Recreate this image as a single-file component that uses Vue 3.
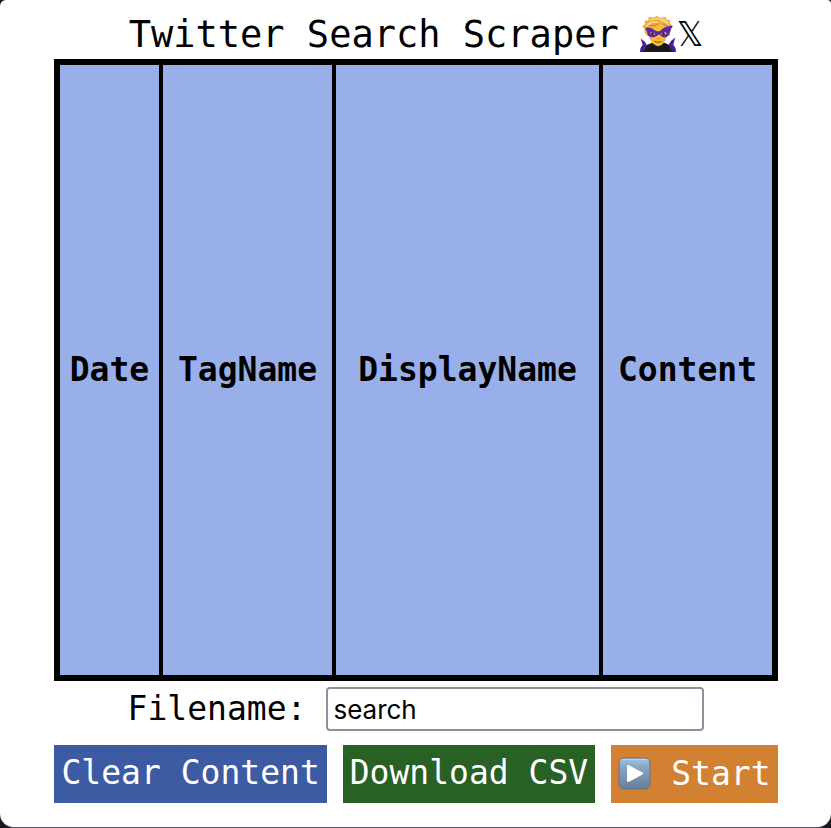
<script setup>
import { ref } from 'vue'

const columns = [
  { name: 'Date', key: 'date' },
  { name: 'TagName', key: 'tag' },
  { name: 'DisplayName', key: 'display' },
  { name: 'Content', key: 'content' }
]
const filename = ref('search')
</script>

<template>
  <main class="popup">
    <h1 class="title">
      <span>Twitter Search Scraper</span>
      <span class="marks">
        <svg class="villain" viewBox="0 0 42 42" aria-hidden="true">
          <path d="M1 41 Q1 36 4 33 L2 26 Q7 29 9 34 L7 41 Z M41 41 Q41 36 38 33 L40 25 Q35 28 32 34 L35 41 Z" fill="#4a1f92" />
          <path d="M4 41 Q7 38 9 33 L16 30 H27 L33 33 Q35 38 38 41 Z" fill="#1f1b24" />
          <path d="M17 27 H26 V32 Q21 37 17 32 Z" fill="#c98518" />
          <path d="M11 15 Q12 8 21 8 Q31 8 31 16 V22 Q30 29 26 32 Q21 36 16 32 Q11 28 11 22 Z" fill="#f8bc35" />
          <path d="M9 23 Q5 19 6 14 L3 13 L7 10 L6 6 L10 6 L11 2 L15 3 L20 1 L23 3 L29 2 L31 5 L35 6 L34 9 L38 13 L35 15 L34 23 L31 22 L31 15 Q26 13 24 10 Q21 14 15 14 Q11 15 11 22 Z" fill="#e8ad45" />
          <path d="M8 13 Q11 7 18 8 M12 6 Q20 2 25 6 Q31 7 33 13 M10 10 Q17 6 22 9 M25 4 Q30 4 32 8" fill="none" stroke="#ffd684" stroke-width="1.6" stroke-linecap="round" />
          <path d="M13 12 Q19 12 22 9 M27 10 Q30 12 32 12 M7 16 Q9 14 11 14" fill="none" stroke="#bd7b28" stroke-width="1" stroke-linecap="round" />
          <path d="M7 14 Q13 13 18 17 Q21 19 24 17 Q29 12 37 12 Q35 17 33 22 Q29 27 24 23 Q22 20 20 23 Q15 27 10 23 Q9 18 7 14 Z" fill="#6027a5" />
          <path d="M12 20 Q15 18 18 21 Q15 23 12 20 Z M24 21 Q27 18 31 20 Q28 23 24 21 Z" fill="#f8d284" />
          <circle cx="15" cy="20.5" r="1.5" fill="#351b22" />
          <circle cx="27" cy="20.5" r="1.5" fill="#351b22" />
          <path d="M20 26 Q21 27 23 26" fill="none" stroke="#cf861b" stroke-width="1" />
          <path d="M17 29 Q21 31 25 29" fill="none" stroke="#93501a" stroke-width="1.3" />
          <path d="M9 41 Q10 35 14 32 Q21 39 28 32 Q33 35 33 41 Z" fill="#19161e" />
        </svg><span class="x-mark">𝕏</span>
      </span>
    </h1>

    <table class="results">
      <colgroup>
        <col v-for="column in columns" :key="column.key" :class="`col-${column.key}`" />
      </colgroup>
      <thead>
        <tr>
          <th v-for="column in columns" :key="column.key" scope="col">{{ column.name }}</th>
        </tr>
      </thead>
    </table>

    <div class="file-row">
      <label for="filename">Filename:</label>
      <input id="filename" v-model="filename" type="text" />
    </div>

    <div class="actions">
      <button class="clear" type="button">Clear Content</button>
      <button class="download" type="button">Download CSV</button>
      <button class="start" type="button">
        <svg class="play" viewBox="0 0 33 33" aria-hidden="true">
          <defs>
            <linearGradient id="playFill" x1="0" y1="0" x2="0" y2="1">
              <stop offset="0" stop-color="#a9c4df" />
              <stop offset="0.25" stop-color="#8ba9c8" />
              <stop offset="0.6" stop-color="#7895b3" />
              <stop offset="1" stop-color="#657f9c" />
            </linearGradient>
          </defs>
          <rect x="1" y="1" width="31" height="31" rx="5" fill="url(#playFill)" stroke="#60758d" />
          <path d="M4 2.5 H29" stroke="#bdd3e8" stroke-linecap="round" />
          <path d="M10 9 L24 16.5 L10 24 Z" fill="#fff" stroke="#fff" stroke-width="2" stroke-linejoin="round" />
        </svg>
        <span>Start</span>
      </button>
    </div>
  </main>
</template>

<style>
body {
  margin: 0;
  background: #17191e;
}
</style>

<style scoped>
.popup {
  box-sizing: border-box;
  min-height: 100vh;
  padding: 11px 53px 24px 54px;
  background: #fff;
  border-bottom: 1px solid #565661;
  border-radius: 6px 4px 14px 14px;
  color: #000;
  font-family: "DejaVu Sans Mono", "Liberation Mono", monospace;
  font-size: 33px;
}

.title {
  display: flex;
  justify-content: center;
  gap: 20px;
  margin: 0;
  font-size: 37px;
  font-weight: 400;
  line-height: 48px;
  white-space: nowrap;
}

.marks {
  display: flex;
  align-items: center;
}

.villain {
  width: 38px;
  height: 38px;
  margin-bottom: 2px;
}

.x-mark {
  font-family: "DejaVu Sans", sans-serif;
  font-size: 33px;
}

.results {
  width: 100%;
  height: 622px;
  table-layout: fixed;
  border: 6px solid #000;
  border-collapse: separate;
  border-spacing: 0;
  background: #98afe9;
}

.col-date { width: 103px; }
.col-tag { width: 173px; }
.col-display { width: 267px; }
.col-content { width: 169px; }

th {
  padding: 0;
  border-right: 4px solid #000;
  font-weight: 700;
  line-height: 40px;
  text-align: center;
}

th:last-child {
  border-right: 0;
}

.file-row {
  display: flex;
  justify-content: center;
  align-items: center;
  gap: 20px;
  margin-top: 6px;
}

.file-row label {
  padding-bottom: 2px;
}

.file-row input {
  box-sizing: border-box;
  width: 378px;
  height: 44px;
  padding: 2px 5px;
  border: 2px solid #8f8f9d;
  border-radius: 4px;
  background: #fff;
  color: #000;
  font-family: Inter, sans-serif;
  font-size: 26px;
}

.actions {
  display: flex;
  justify-content: center;
  gap: 16px;
  margin-top: 14px;
}

button {
  display: flex;
  align-items: center;
  height: 58px;
  padding: 0 7px 2px;
  border: 0;
  border-radius: 0;
  color: #fff;
  font: inherit;
  line-height: 40px;
  white-space: nowrap;
}

.clear { background: #3d5ba3; }
.download { background: #296023; }

.start {
  gap: 20px;
  padding-bottom: 0;
  background: #d28031;
}

.play {
  width: 33px;
  height: 33px;
  margin-bottom: 2px;
}
</style>
